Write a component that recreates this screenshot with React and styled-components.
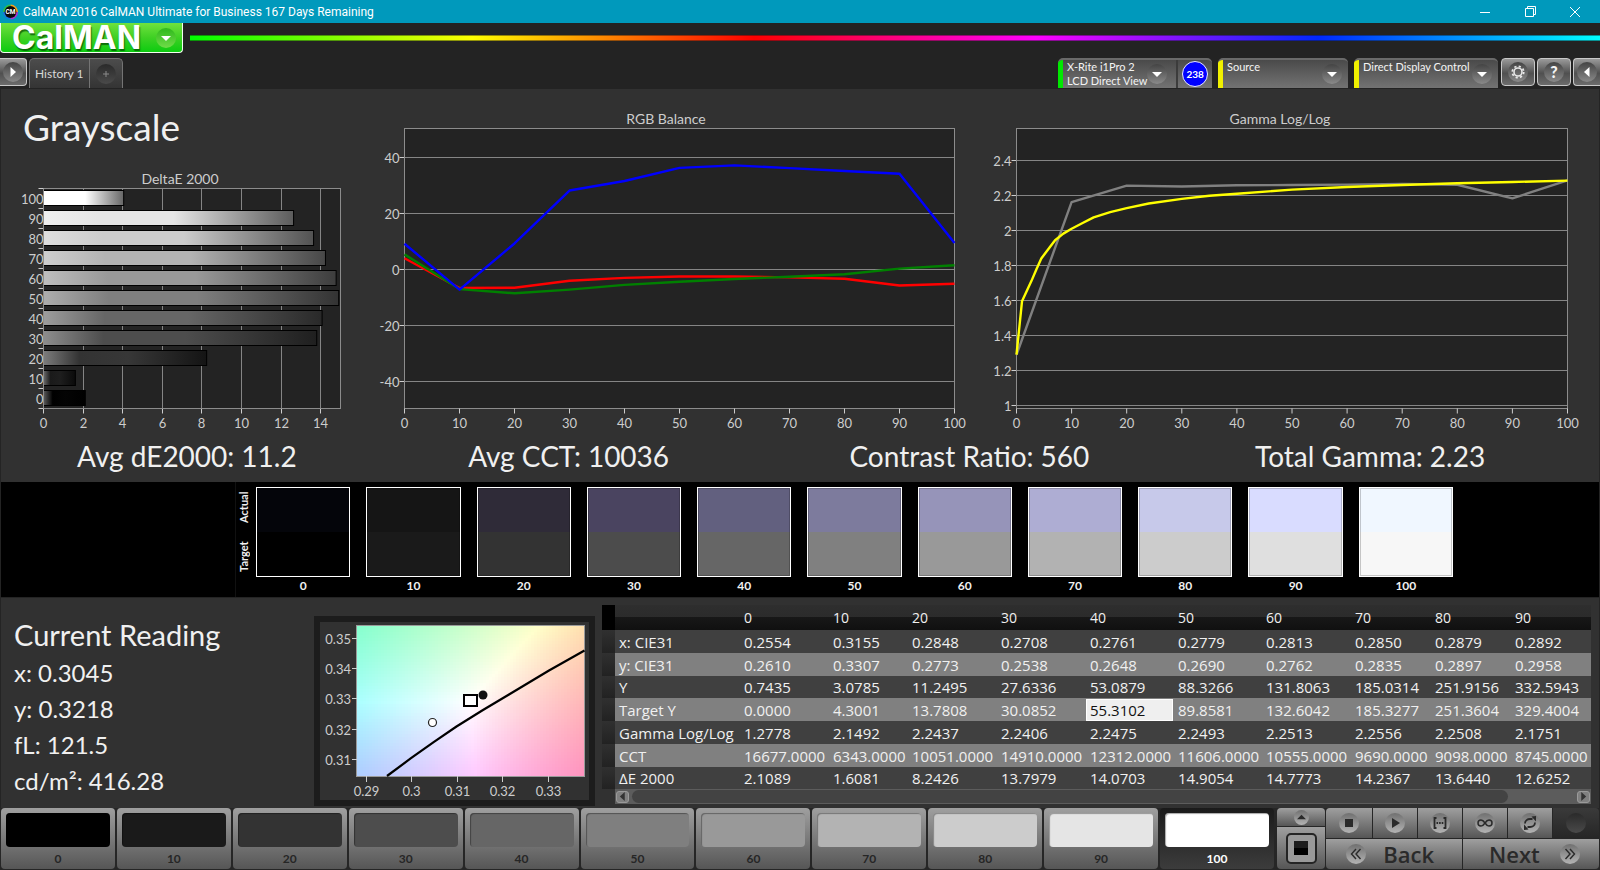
import React from "react";
import styled, { createGlobalStyle, css } from "styled-components";

/* ---------- data ---------- */

const LEVELS = [0, 10, 20, 30, 40, 50, 60, 70, 80, 90, 100];

const DELTA_E = [
  { level: 100, value: 4.05 },
  { level: 90, value: 12.63 },
  { level: 80, value: 13.64 },
  { level: 70, value: 14.24 },
  { level: 60, value: 14.78 },
  { level: 50, value: 14.91 },
  { level: 40, value: 14.07 },
  { level: 30, value: 13.8 },
  { level: 20, value: 8.24 },
  { level: 10, value: 1.61 },
  { level: 0, value: 2.11 },
];

const atLevels = (values) => values.map((v, i) => [i * 10, v]);

const RGB_LINES = [
  { color: "#f00", points: atLevels([4, -6.6, -6.5, -4, -3, -2.5, -2.5, -2.8, -3.3, -5.7, -5.1]) },
  { color: "#008000", points: atLevels([5.4, -7, -8.5, -7.2, -5.5, -4.4, -3.4, -2.6, -1.7, 0.3, 1.5]) },
  { color: "#00f", points: atLevels([9.2, -7.2, 9.3, 28.2, 31.6, 36.3, 37.2, 36.2, 35.2, 34.2, 9.5]) },
];

const GAMMA_LINES = [
  {
    color: "#808080",
    points: atLevels([1.288, 2.163, 2.257, 2.252, 2.259, 2.261, 2.263, 2.267, 2.262, 2.184, 2.287]),
  },
  {
    color: "#ff0",
    points: [
      [0, 1.288], [1, 1.594], [2.7, 1.71], [3.6, 1.777], [4.5, 1.84], [6, 1.902], [7, 1.944],
      [8.5, 1.982], [10, 2.01], [12, 2.043], [14, 2.075], [17, 2.105], [20, 2.128], [24, 2.155],
      [30, 2.181], [35, 2.199], [40, 2.211], [50, 2.234], [60, 2.249], [70, 2.261], [80, 2.271],
      [90, 2.278], [100, 2.286],
    ],
  },
];

const SWATCHES = [
  ["#04050a", "#000000"],
  ["#151515", "#1a1a1a"],
  ["#2f2b38", "#333333"],
  ["#4a4460", "#4c4c4c"],
  ["#62607f", "#666666"],
  ["#7d7b9d", "#808080"],
  ["#9694b9", "#999999"],
  ["#aeadd3", "#b2b2b2"],
  ["#c7c9ea", "#cccccc"],
  ["#d9dcff", "#dfdfdf"],
  ["#f0f7ff", "#f7f7f7"],
];

const TABLE_ROWS = [
  ["x: CIE31", "0.2554", "0.3155", "0.2848", "0.2708", "0.2761", "0.2779", "0.2813", "0.2850", "0.2879", "0.2892"],
  ["y: CIE31", "0.2610", "0.3307", "0.2773", "0.2538", "0.2648", "0.2690", "0.2762", "0.2835", "0.2897", "0.2958"],
  ["Y", "0.7435", "3.0785", "11.2495", "27.6336", "53.0879", "88.3266", "131.8063", "185.0314", "251.9156", "332.5943"],
  ["Target Y", "0.0000", "4.3001", "13.7808", "30.0852", "55.3102", "89.8581", "132.6042", "185.3277", "251.3604", "329.4004"],
  ["Gamma Log/Log", "1.2778", "2.1492", "2.2437", "2.2406", "2.2475", "2.2493", "2.2513", "2.2556", "2.2508", "2.1751"],
  ["CCT", "16677.0000", "6343.0000", "10051.0000", "14910.0000", "12312.0000", "11606.0000", "10555.0000", "9690.0000", "9098.0000", "8745.0000"],
  ["ΔE 2000", "2.1089", "1.6081", "8.2426", "13.7979", "14.0703", "14.9054", "14.7773", "14.2367", "13.6440", "12.6252"],
];

const COLUMN_WIDTHS = [13, 125, 89, 79, 89, 89, 88, 88, 89, 80, 80, 80];

/* ---------- shared styles ---------- */

const GlobalStyle = createGlobalStyle`
  *, *::before, *::after { box-sizing: border-box; }
  body {
    margin: 0;
    background: #232323;
    color: #f0f0f0;
    font-family: Lato, "Liberation Sans", sans-serif;
  }
  button, input { font: inherit; color: inherit; }
  button { border: 0; padding: 0; margin: 0; background: none; cursor: pointer; }
  h1, h2, p, dl, dd { margin: 0; font-weight: 400; }
  svg { display: block; }
`;

const uiFont = css`
  font-family: "Open Sans", "Noto Sans", sans-serif;
`;

const Page = styled.div`
  display: flex;
  flex-direction: column;
  min-height: 100vh;
  overflow: hidden;
`;

/* ---------- title bar ---------- */

const TitleBar = styled.div`
  display: flex;
  align-items: center;
  height: 23px;
  padding: 0 5px 0 3px;
  gap: 5px;
  background: #0099bc;
  color: #fff;
  font-family: Roboto, sans-serif;
  font-size: 12px;
  line-height: 16px;
`;

const TitleText = styled.span`
  flex: 1;
`;

const WindowButton = styled.button`
  display: grid;
  place-items: center;
  width: 40px;
  height: 20px;
`;

/* ---------- header ---------- */

const Header = styled.header`
  display: flex;
  flex-direction: column;
  gap: 5px;
  background: #232323;
`;

const BrandRow = styled.div`
  display: flex;
  align-items: center;
  gap: 7px;
  height: 30px;
`;

const BrandButton = styled.button`
  display: flex;
  align-items: center;
  justify-content: space-between;
  width: 183px;
  height: 30px;
  padding: 0 6px 0 11px;
  border: 1px solid #f4fff0;
  border-top: 0;
  border-radius: 0 0 4px 4px;
  background: linear-gradient(#6fe23e, #3fd024 50%, #0ccc10);
  color: #fff;
  font-family: Inter, sans-serif;
  font-size: 32px;
  font-weight: 700;
  line-height: 28px;
  text-shadow: 1px 2px 1px rgba(0, 70, 0, 0.7);
`;

const Rainbow = styled.div`
  flex: 1;
  height: 6px;
  border: solid rgba(20, 20, 20, 0.45);
  border-width: 1px 0;
  background: linear-gradient(90deg, #0f0, #ff0, #f00, #f0f, #0028ff, #0ff) border-box;
`;

const TabRow = styled.div`
  display: flex;
  align-items: flex-start;
  height: 31px;
`;

const Spacer = styled.div`
  flex: 1;
`;

const Round = styled.span`
  display: grid;
  place-items: center;
  flex: none;
  width: ${(p) => p.$size || 20}px;
  height: ${(p) => p.$size || 20}px;
  border-radius: 50%;
  background: ${(p) =>
    p.$tone === "green"
      ? "linear-gradient(#2fb81c, #6fdc48)"
      : p.$tone === "dim"
        ? "linear-gradient(#2a2a2a, #4a4a4a)"
        : p.$tone === "light"
          ? "linear-gradient(#707070, #b4b4b4)"
          : "linear-gradient(#444, #8a8a8a)"};
`;

const SquareButton = styled.button`
  display: grid;
  place-items: center;
  width: 34px;
  height: 28px;
  border: 1px solid #c8c8c8;
  border-radius: 4px;
  background: linear-gradient(#9a9a9a, #505050 55%, #6c6c6c);
  ${(p) =>
    p.$edge === "left" &&
    css`
      width: 27px;
      border-left: 0;
      border-radius: 0 4px 4px 0;
      margin-right: 2px;
    `}
  ${(p) =>
    p.$edge === "right" &&
    css`
      width: 27px;
      border-right: 0;
      border-radius: 4px 0 0 4px;
    `}
`;

const TabGroup = styled.div`
  display: flex;
  height: 30px;
  border: 1px solid #747474;
  border-bottom: 0;
  border-radius: 5px 5px 0 0;
  background: linear-gradient(#4c4c4c, #343434);
`;

const HistoryTab = styled.button`
  padding: 0 5px;
  color: #d8d8d8;
  font-size: 12px;
  line-height: 28px;
  border-right: 1px solid #747474;
`;

const AddTab = styled.button`
  display: grid;
  place-items: center;
  width: 32px;
`;

const DeviceGroup = styled.div`
  display: flex;
  align-items: flex-start;
  gap: 6px;
  margin-right: 3px;
`;

const ToolGroup = styled.div`
  display: flex;
  gap: 2px;
`;

const Device = styled.div`
  display: flex;
  width: ${(p) => p.$width}px;
  height: 30px;
  border-top: 2px solid #6a6a6a;
  border-radius: 5px 5px 0 0;
  background: linear-gradient(#4a4a4a, #737373);
  overflow: hidden;
`;

const DeviceButton = styled.button`
  display: flex;
  flex: 1;
  align-items: flex-start;
  padding: 0 ${(p) => p.$inset || 6}px 0 4px;
  border-left: 5px solid ${(p) => p.$color};
  text-align: left;
  color: #f4f4f4;
  font-size: 11px;
  line-height: 14px;
  white-space: nowrap;
`;

const DeviceLabel = styled.span`
  flex: 1;
`;

const DeviceArrow = styled(Round)`
  align-self: center;
`;

const BadgeCell = styled.div`
  display: grid;
  place-items: center;
  width: 36px;
  border-left: 2px solid #3c3c3c;
`;

const Badge = styled.span`
  display: grid;
  place-items: center;
  width: 26px;
  height: 26px;
  border: 1px solid #e8e8ff;
  border-radius: 50%;
  background: #00f;
  font-size: 10px;
  font-weight: 700;
  color: #fff;
`;

/* ---------- charts ---------- */

const Panel = styled.main`
  display: flex;
  flex-direction: column;
  background: #313131;
  border: solid #242424;
  border-width: 0 1px;
`;

const Charts = styled.div`
  display: grid;
  grid-template-columns: 371fr 606fr 621fr;
`;

const LeftColumn = styled.section`
  display: flex;
  flex-direction: column;
  justify-content: space-between;
`;

const PageTitle = styled.h1`
  padding: 17px 0 0 22px;
  font-size: 37px;
  line-height: 42px;
`;

const ChartSvg = styled.svg`
  width: 100%;
  height: auto;
  font-size: 13px;
  fill: #cdcdcd;
`;

const Stats = styled.dl`
  display: grid;
  grid-template-columns: 372fr 392fr 410fr 392fr;
  padding: 0 33px 7px 0;
`;

const Stat = styled.div`
  display: flex;
  justify-content: center;
  gap: 7px;
  font-size: 28px;
  line-height: 38px;
  white-space: nowrap;
`;

const PLOT_TOP = 39.5;
const PLOT_BOTTOM = 319.5;

function LineChart({ title, titleX, width, left, right, ticks, yOf, lines }) {
  const xOf = (v) => left + ((right - left) * v) / 100;
  return (
    <ChartSvg viewBox={`0 0 ${width} 348`} role="img" aria-label={title}>
      <text x={titleX} y="35" textAnchor="middle" fontSize="14">{title}</text>
      <rect x={left} y={PLOT_TOP} width={right - left} height={PLOT_BOTTOM - PLOT_TOP} fill="#232323" />
      {ticks.map((t) => {
        const y = Math.floor(yOf(t)) + 0.5;
        return (
          <g key={t}>
            <line x1={left - 5} x2={left} y1={y} y2={y} stroke="#cdcdcd" />
            <line x1={left} x2={right} y1={y} y2={y} stroke="#858585" />
            <text x={left - 5} y={y + 5} textAnchor="end">{t}</text>
          </g>
        );
      })}
      <rect x={left} y={PLOT_TOP} width={right - left} height={PLOT_BOTTOM - PLOT_TOP} fill="none" stroke="#8c8c8c" />
      {LEVELS.map((v) => (
        <g key={v}>
          <line x1={xOf(v)} x2={xOf(v)} y1={PLOT_BOTTOM} y2={PLOT_BOTTOM + 5} stroke="#cdcdcd" />
          <text x={xOf(v)} y="339" textAnchor="middle">{v}</text>
        </g>
      ))}
      {lines.map((l) => (
        <polyline
          key={l.color}
          points={l.points.map(([x, y]) => `${xOf(x)},${yOf(y)}`).join(" ")}
          fill="none"
          stroke={l.color}
          strokeWidth="2.4"
          strokeLinejoin="round"
        />
      ))}
    </ChartSvg>
  );
}

const gray = (n) => {
  const c = Math.round(Math.min(255, n));
  return `rgb(${c},${c},${c})`;
};

function DeltaEChart() {
  const left = 42.5;
  const right = 339.5;
  const top = 20.5;
  const bottom = 240.5;
  const xOf = (v) => left + v * 19.8;
  return (
    <ChartSvg viewBox="0 0 371 269" role="img" aria-label="DeltaE 2000">
      <defs>
        {DELTA_E.map(({ level }) => {
          const base = level * 2.55;
          return (
            <linearGradient id={`bar${level}`} key={level}>
              <stop offset="0" stopColor={gray(base + (255 - base) * 0.36)} />
              <stop offset="0.22" stopColor={gray(base)} />
              <stop offset="0.52" stopColor={gray(base + (level < 30 ? 4 : 0))} />
              <stop offset="1" stopColor={gray(base * 0.4)} />
            </linearGradient>
          );
        })}
      </defs>
      <text x="179" y="16" textAnchor="middle" fontSize="14">DeltaE 2000</text>
      <rect x={left} y={top} width={right - left} height={bottom - top} fill="#232323" />
      {[0, 2, 4, 6, 8, 10, 12, 14].map((v) => {
        const x = Math.floor(xOf(v)) + 0.5;
        return (
          <g key={v}>
            <line x1={x} x2={x} y1={top} y2={bottom} stroke="#858585" />
            <line x1={x} x2={x} y1={bottom} y2={bottom + 5} stroke="#cdcdcd" />
            <text x={x} y="260" textAnchor="middle">{v}</text>
          </g>
        );
      })}
      <rect x={left} y={top} width={right - left} height={bottom - top} fill="none" stroke="#8c8c8c" />
      {DELTA_E.map(({ level, value }, i) => (
        <g key={level}>
          <rect
            x={left}
            y={top + 2 + i * 20}
            width={xOf(value) - left}
            height="15"
            fill={`url(#bar${level})`}
            stroke="#000"
          />
          <text x={left} y={top + 15 + i * 20} textAnchor="end">{level}</text>
        </g>
      ))}
      {DELTA_E.concat({}).map((_, i) => (
        <line key={i} x1={left - 5} x2={left} y1={top + i * 20} y2={top + i * 20} stroke="#cdcdcd" />
      ))}
      <line x1={left} x2={left} y1={top} y2={bottom} stroke="#8c8c8c" />
    </ChartSvg>
  );
}

/* ---------- swatch strip ---------- */

const Strip = styled.section`
  display: flex;
  height: 115px;
  margin: 0 1px;
  padding-right: 146px;
  background: #000;
`;

const StripBlank = styled.div`
  flex: none;
  width: 235px;
  border-right: 1px solid #111;
`;

const StripLabels = styled.div`
  display: flex;
  flex: none;
  flex-direction: column;
  width: 20px;
`;

const StripLabel = styled.span`
  height: 50px;
  width: 16px;
  writing-mode: vertical-rl;
  transform: rotate(180deg);
  text-align: center;
  font-size: 11px;
  font-weight: 700;
  line-height: 16px;
`;

const StripGrid = styled.div`
  display: grid;
  flex: 1;
  grid-template-columns: repeat(11, minmax(0, 1fr));
  gap: 16px;
  padding-top: 5px;
`;

const Swatch = styled.figure`
  margin: 0;
  text-align: center;
  font-size: 12px;
  font-weight: 700;
  line-height: 18px;
`;

const SwatchBox = styled.div`
  height: 90px;
  border: 1px solid #fff;
  box-shadow: inset 0 0 0 1px rgba(0, 0, 0, 0.2);
  background: linear-gradient(${(p) => p.$actual} 50%, ${(p) => p.$target} 50%);
`;

/* ---------- lower area ---------- */

const Lower = styled.section`
  display: grid;
  grid-template-columns: 313fr 281fr 1004fr;
  align-items: start;
  height: 211px;
  border: 1px solid #242424;
  border-bottom: 0;
  background: #313131;
`;

const Reading = styled.div`
  padding: 17px 0 0 13px;
  font-size: 24px;
  line-height: 36px;
`;

const ReadingTitle = styled.h2`
  font-size: 29px;
  line-height: 40px;
`;

const CieFrame = styled.div`
  margin-top: 18px;
  border: 6px solid #1c1c1c;
  background: #313131;
`;

const CieSvg = styled.svg`
  width: 100%;
  height: auto;
  font-size: 13px;
  fill: #cdcdcd;
`;

/* Chromaticity to screen colour, scaled so that the strongest channel is full. */
function cieColor(x, y) {
  const X = x / y;
  const Z = (1 - x - y) / y;
  const rgb = [
    3.2406 * X - 1.5372 - 0.4986 * Z,
    -0.9689 * X + 1.8758 + 0.0415 * Z,
    0.0557 * X - 0.204 + 1.057 * Z,
  ];
  const max = Math.max(...rgb);
  return `rgb(${rgb.map((c) => Math.round((255 * c) / max)).join(",")})`;
}

function CieChart() {
  const left = 37;
  const top = 4;
  const w = 228;
  const h = 150;
  const step = 3;
  const xOf = (v) => left + (v - 0.288) * 4560;
  const yOf = (v) => top + (0.354) * 3030 - v * 3030;
  const cells = [];
  for (let cy = 0; cy < h; cy += step) {
    for (let cx = 0; cx < w; cx += step) {
      const x = 0.288 + (cx + step / 2) / 4560;
      const y = 0.354 - (cy + step / 2) / 3030;
      cells.push(
        <rect key={`${cx}-${cy}`} x={left + cx} y={top + cy} width={step} height={step} fill={cieColor(x, y)} />
      );
    }
  }
  return (
    <CieSvg viewBox="0 0 269 178" role="img" aria-label="Chromaticity">
      <g shapeRendering="crispEdges">{cells}</g>
      <rect x={left - 0.5} y={top - 0.5} width={w} height={h + 1} fill="none" stroke="#9a9a9a" />
      {[0.35, 0.34, 0.33, 0.32, 0.31].map((v) => {
        const y = Math.floor(yOf(v)) + 0.5;
        return (
          <g key={v}>
            <line x1={left - 5} x2={left} y1={y} y2={y} stroke="#cdcdcd" />
            <text x={left - 6} y={y + 5} textAnchor="end">{v}</text>
          </g>
        );
      })}
      {[0.29, 0.3, 0.31, 0.32, 0.33].map((v) => {
        const x = Math.floor(xOf(v)) + 0.5;
        return (
          <g key={v}>
            <line x1={x} x2={x} y1={top + h} y2={top + h + 6} stroke="#cdcdcd" />
            <text x={x} y="174" textAnchor="middle">{v}</text>
          </g>
        );
      })}
      <polyline
        points="67,154 91,136.2 114,119.800 136.500,104.500 163,88 189,72.500 229,48.500 264.500,28.500"
        fill="none"
        stroke="#000"
        strokeWidth="2.2"
        strokeLinejoin="round"
      />
      <rect x="144" y="73" width="13" height="11" fill="#fff" stroke="#000" strokeWidth="2" />
      <circle cx="163" cy="73" r="4.500" fill="#111" />
      <circle cx="112.500" cy="100.500" r="4" fill="#fff" stroke="#222" strokeWidth="1.200" />
    </CieSvg>
  );
}

const TableArea = styled.div`
  padding: 7px 8px 0 7px;
`;

const DataTable = styled.table`
  ${uiFont}
  width: 100%;
  table-layout: fixed;
  border-collapse: collapse;
  font-size: 15px;
  line-height: 20px;
  white-space: nowrap;

  th, td {
    padding: 0 0 0 4px;
    font-weight: 400;
    text-align: left;
  }
`;

const HeadRow = styled.tr`
  height: 25px;
  background: linear-gradient(#2e2e2e, #2b2b2b 50%, #171717 50%, #101010);
  font-size: 14px;

  th:first-child {
    background: #000;
  }
`;

const BodyRow = styled.tr`
  height: 23px;
  background: #404040;

  &:nth-child(even) {
    background: #808080;
  }
  &:nth-child(4n + 3) {
    height: 22px;
  }
  td:first-child {
    background: linear-gradient(#303030, #222);
  }
`;

const EditCell = styled.td`
  && {
    padding: 0 1px 0 0;
  }
`;

const CellInput = styled.input`
  display: block;
  width: 100%;
  height: 22px;
  padding: 0 3px;
  border: 1px solid #fff;
  border-radius: 0;
  background: #efefef;
  color: #111;
  outline: 0;
`;

const ScrollBar = styled.div`
  display: flex;
  align-items: center;
  height: 15px;
  margin-left: 13px;
  padding: 0 1px;
  gap: 3px;
  background: #5c5c5c;
`;

const ScrollButton = styled.button`
  display: grid;
  place-items: center;
  width: 13px;
  height: 12px;
  border: 1px solid #9a9a9a;
  border-radius: 3px;
  background: #808080;
`;

const ScrollTrack = styled.div`
  display: flex;
  flex: 1;
  height: 13px;
`;

const ScrollThumb = styled.div`
  width: 93%;
  border-radius: 7px;
  background: #434343;
`;

/* ---------- pattern and transport bar ---------- */

const BottomBar = styled.footer`
  display: flex;
  height: 62px;
  padding: 0 1px;
  gap: 3px;
  background: #262626;
`;

const metal = css`
  background: linear-gradient(#9f9f9f, #565656);
`;

const PatternList = styled.div`
  display: grid;
  flex: 1;
  grid-template-columns: repeat(11, minmax(0, 1fr));
  gap: 2px;
`;

const PatternButton = styled.button`
  display: flex;
  flex-direction: column;
  height: 61px;
  padding: 5px 5px 0;
  border-radius: 4px;
  ${metal}
  color: #262626;
  font-size: 12px;
  font-weight: 700;
  line-height: 20px;
  text-align: center;
  ${(p) =>
    p.$active &&
    css`
      background: linear-gradient(#1a1a1a, #3c3c3c);
      color: #fff;
    `}
`;

const PatternColor = styled.span`
  align-self: stretch;
  height: 36px;
  border-radius: 4px;
  background: ${(p) => p.$color};
  box-shadow: inset 1px 1px 1px rgba(0, 0, 0, 0.35);
`;

const PatternLabel = styled.span`
  align-self: stretch;
  padding-top: 2px;
`;

const WindowControls = styled.div`
  display: grid;
  grid-template-rows: 18px 42px;
  gap: 1px;
  width: 48px;
`;

const MetalButton = styled.button`
  display: flex;
  align-items: center;
  justify-content: center;
  ${metal}
  border-radius: ${(p) => p.$radius || "0"};
  ${(p) => p.$off && "background: linear-gradient(#3a3a3a, #262626);"}
`;

const Controls = styled.div`
  display: flex;
  gap: 1px;
`;

const Transport = styled.div`
  display: grid;
  grid-template-columns: 46px 44px 44px 44px 44px 46px;
  grid-template-rows: 30px 30px;
  gap: 1px;
`;

const StepButton = styled(MetalButton)`
  ${uiFont}
  grid-column: span 3;
  justify-content: space-between;
  padding: ${(p) => (p.$forward ? "0 19px 0 26px" : "0 28px 0 20px")};
  color: #2a2a2a;
  font-size: 22px;
  font-weight: 600;
  line-height: 28px;
`;

const StopFrame = styled.span`
  display: grid;
  place-items: center;
  width: 31px;
  height: 31px;
  border: 2px solid #242424;
  border-radius: 5px;
  background: #999;
`;

const StopSquare = styled.span`
  width: 14px;
  height: 14px;
  background: linear-gradient(#1c1c1c 50%, #000 50%);
`;

/* ---------- icons ---------- */

const Triangle = ({ dir = "down", color = "#fff", size = 10 }) => {
  const d = {
    down: "M0 3h10L5 8z",
    up: "M0 7h10L5 2z",
    right: "M2.500 0v10L8 5z",
    left: "M7.500 0v10L2 5z",
  }[dir];
  return (
    <svg width={size} height={size} viewBox="0 0 10 10" aria-hidden="true">
      <path d={d} fill={color} />
    </svg>
  );
};

const Glyph = ({ children, size = 16 }) => (
  <svg
    width={size}
    height={size}
    viewBox="0 0 16 16"
    fill="none"
    stroke="#2a2a2a"
    strokeWidth="1.8"
    aria-hidden="true"
  >
    {children}
  </svg>
);

const AppIcon = () => (
  <svg width="15" height="16" viewBox="0 0 16 16" aria-hidden="true">
    <g fill="none" strokeWidth="3">
      <path d="M8 1.500A6.500 6.500 0 0 1 14.500 8" stroke="#f5a020" />
      <path d="M14.500 8A6.500 6.500 0 0 1 8 14.500" stroke="#b030d0" />
      <path d="M8 14.500A6.500 6.500 0 0 1 1.500 8" stroke="#1878e0" />
      <path d="M1.500 8A6.500 6.500 0 0 1 8 1.500" stroke="#30c040" />
    </g>
    <circle cx="8" cy="8" r="6.300" fill="#0a0a0a" />
    <text x="8" y="10.500" textAnchor="middle" fontSize="7" fontWeight="700" fill="#fff">CM</text>
  </svg>
);

const GearIcon = () => (
  <svg width="14" height="14" viewBox="0 0 14 14" fill="none" stroke="#e8e8e8" aria-hidden="true">
    <circle cx="7" cy="7" r="4" strokeWidth="1.600" />
    <circle cx="7" cy="7" r="5.700" strokeWidth="1.800" strokeDasharray="2.200 2.277" />
  </svg>
);

const HelpMark = styled.span`
  font-size: 16px;
  font-weight: 900;
  line-height: 20px;
  color: #f4f4f4;
`;

const PlusIcon = () => (
  <svg width="8" height="8" viewBox="0 0 8 8" stroke="#8a8a8a" aria-hidden="true">
    <path d="M4 1v6M1 4h6" />
  </svg>
);

/* ---------- page ---------- */

export default function App() {
  return (
    <Page>
      <GlobalStyle />
      <TitleBar>
        <AppIcon />
        <TitleText>CalMAN 2016 CalMAN Ultimate for Business 167 Days Remaining</TitleText>
        <WindowButton aria-label="Minimize">
          <svg width="10" height="10" viewBox="0 0 10 10" stroke="#fff"><path d="M0 5.500h10" /></svg>
        </WindowButton>
        <WindowButton aria-label="Restore">
          <svg width="11" height="11" viewBox="0 0 11 11" stroke="#fff" fill="none">
            <path d="M.5 2.500h8v8h-8zM2.500 2.500v-2h8v8h-2" />
          </svg>
        </WindowButton>
        <WindowButton aria-label="Close">
          <svg width="10" height="10" viewBox="0 0 10 10" stroke="#fff"><path d="M0 0l10 10M10 0L0 10" /></svg>
        </WindowButton>
      </TitleBar>

      <Header>
        <BrandRow>
          <BrandButton>
            CalMAN
            <Round $tone="green"><Triangle /></Round>
          </BrandButton>
          <Rainbow />
        </BrandRow>
        <TabRow>
          <SquareButton $edge="left" aria-label="Show panel">
            <Round><Triangle dir="right" /></Round>
          </SquareButton>
          <TabGroup>
            <HistoryTab>History 1</HistoryTab>
            <AddTab aria-label="Add history">
              <Round $tone="dim"><PlusIcon /></Round>
            </AddTab>
          </TabGroup>
          <Spacer />
          <DeviceGroup>
            <Device $width={154}>
              <DeviceButton $color="#00e800" $inset={9}>
                <DeviceLabel>X-Rite i1Pro 2<br />LCD Direct View</DeviceLabel>
                <DeviceArrow><Triangle /></DeviceArrow>
              </DeviceButton>
              <BadgeCell><Badge>238</Badge></BadgeCell>
            </Device>
            <Device $width={130}>
              <DeviceButton $color="#f0f000">
                <DeviceLabel>Source</DeviceLabel>
                <DeviceArrow><Triangle /></DeviceArrow>
              </DeviceButton>
            </Device>
            <Device $width={144}>
              <DeviceButton $color="#f0f000">
                <DeviceLabel>Direct Display Control</DeviceLabel>
                <DeviceArrow><Triangle /></DeviceArrow>
              </DeviceButton>
            </Device>
          </DeviceGroup>
          <ToolGroup>
            <SquareButton aria-label="Settings"><Round><GearIcon /></Round></SquareButton>
            <SquareButton aria-label="Help"><Round><HelpMark>?</HelpMark></Round></SquareButton>
            <SquareButton $edge="right" aria-label="Hide panel">
              <Round><Triangle dir="left" /></Round>
            </SquareButton>
          </ToolGroup>
        </TabRow>
      </Header>

      <Panel>
        <Charts>
          <LeftColumn>
            <PageTitle>Grayscale</PageTitle>
            <DeltaEChart />
          </LeftColumn>
          <LineChart
            title="RGB Balance"
            titleX={294}
            width={606}
            left={32.5}
            right={582.5}
            ticks={[40, 20, 0, -20, -40]}
            yOf={(v) => 180.5 - v * 2.8}
            lines={RGB_LINES}
          />
          <LineChart
            title="Gamma Log/Log"
            titleX={302}
            width={621}
            left={38.5}
            right={589.5}
            ticks={[2.4, 2.2, 2, 1.8, 1.6, 1.4, 1.2, 1]}
            yOf={(v) => 316 - (v - 1) * 174.5}
            lines={GAMMA_LINES}
          />
        </Charts>
        <Stats>
          <Stat><dt>Avg dE2000:</dt><dd>11.2</dd></Stat>
          <Stat><dt>Avg CCT:</dt><dd>10036</dd></Stat>
          <Stat><dt>Contrast Ratio:</dt><dd>560</dd></Stat>
          <Stat><dt>Total Gamma:</dt><dd>2.23</dd></Stat>
        </Stats>
      </Panel>

      <Strip>
        <StripBlank />
        <StripLabels>
          <StripLabel>Actual</StripLabel>
          <StripLabel>Target</StripLabel>
        </StripLabels>
        <StripGrid>
          {SWATCHES.map(([actual, target], i) => (
            <Swatch key={i}>
              <SwatchBox $actual={actual} $target={target} />
              <figcaption>{LEVELS[i]}</figcaption>
            </Swatch>
          ))}
        </StripGrid>
      </Strip>

      <Lower>
        <Reading>
          <ReadingTitle>Current Reading</ReadingTitle>
          <p>x: 0.3045</p>
          <p>y: 0.3218</p>
          <p>fL: 121.5</p>
          <p>cd/m²: 416.28</p>
        </Reading>
        <CieFrame><CieChart /></CieFrame>
        <TableArea>
          <DataTable>
            <colgroup>
              {COLUMN_WIDTHS.map((w, i) => <col key={i} width={w} />)}
            </colgroup>
            <thead>
              <HeadRow>
                <th />
                <th />
                {LEVELS.slice(0, 10).map((l) => <th key={l} scope="col">{l}</th>)}
              </HeadRow>
            </thead>
            <tbody>
              {TABLE_ROWS.map(([name, ...cells]) => (
                <BodyRow key={name}>
                  <td />
                  <th scope="row">{name}</th>
                  {cells.map((c, i) =>
                    name === "Target Y" && i === 4 ? (
                      <EditCell key={i}>
                        <CellInput defaultValue={c} aria-label="Target Y at 40" />
                      </EditCell>
                    ) : (
                      <td key={i}>{c}</td>
                    )
                  )}
                </BodyRow>
              ))}
            </tbody>
          </DataTable>
          <ScrollBar>
            <ScrollButton aria-label="Scroll left"><Triangle dir="left" color="#333" size={9} /></ScrollButton>
            <ScrollTrack><ScrollThumb /></ScrollTrack>
            <ScrollButton aria-label="Scroll right"><Triangle dir="right" color="#333" size={9} /></ScrollButton>
          </ScrollBar>
        </TableArea>
      </Lower>

      <BottomBar>
        <PatternList>
          {LEVELS.map((l) => (
            <PatternButton key={l} $active={l === 100}>
              <PatternColor $color={gray(l * 2.55)} />
              <PatternLabel>{l}</PatternLabel>
            </PatternButton>
          ))}
        </PatternList>
        <Controls>
          <WindowControls>
            <MetalButton $radius="4px 4px 0 0" aria-label="Expand">
              <Round $tone="light" $size={15}><Triangle dir="up" color="#2a2a2a" size={9} /></Round>
            </MetalButton>
            <MetalButton $radius="0 0 4px 4px" aria-label="Pattern window">
              <StopFrame><StopSquare /></StopFrame>
            </MetalButton>
          </WindowControls>
          <Transport>
            <MetalButton $radius="4px 0 0 0" aria-label="Stop">
              <Round $tone="light"><Glyph><path d="M4 4h8v8H4z" fill="#2a2a2a" stroke="none" /></Glyph></Round>
            </MetalButton>
            <MetalButton aria-label="Play">
              <Round $tone="light"><Glyph><path d="M5 3v10l8-5z" fill="#2a2a2a" stroke="none" /></Glyph></Round>
            </MetalButton>
            <MetalButton aria-label="Read series">
              <Round $tone="light">
                <Glyph><path d="M4.500 3h-2v10h2M11.500 3h2v10h-2" /><path d="M4.500 8h7" strokeDasharray="1.600 1" /></Glyph>
              </Round>
            </MetalButton>
            <MetalButton aria-label="Read continuously">
              <Round $tone="light">
                <Glyph>
                  <path
                    strokeWidth="1.500"
                    d="M8 8C6.500 5.800 5.500 5 4 5a3 3 0 0 0 0 6c1.500 0 2.500-.8 4-3s2.500-3 4-3a3 3 0 0 1 0 6c-1.500 0-2.500-.8-4-3z"
                  />
                </Glyph>
              </Round>
            </MetalButton>
            <MetalButton aria-label="Refresh">
              <Round $tone="light">
                <Glyph>
                  <path d="M3 8.500C3 5.500 5.500 4 8 4h2.500M13 7.500c0 3-2.500 4.500-5 4.500H5.500" />
                  <path d="M9.500 1.500L14 1v5.500zM6.500 14.500L2 15V9.500z" fill="#2a2a2a" stroke="none" />
                </Glyph>
              </Round>
            </MetalButton>
            <MetalButton $off $radius="0 4px 0 0" aria-label="Status">
              <Round $tone="dim" />
            </MetalButton>
            <StepButton $radius="0 0 0 4px">
              <Round $tone="light"><Glyph><path strokeWidth="1.400" d="M8 3L3.500 8L8 13M12.500 3L8 8l4.500 5" /></Glyph></Round>
              Back
            </StepButton>
            <StepButton $forward $radius="0 0 4px 0">
              Next
              <Round $tone="light"><Glyph><path strokeWidth="1.400" d="M3.500 3L8 8l-4.500 5M8 3l4.500 5L8 13" /></Glyph></Round>
            </StepButton>
          </Transport>
        </Controls>
      </BottomBar>
    </Page>
  );
}
